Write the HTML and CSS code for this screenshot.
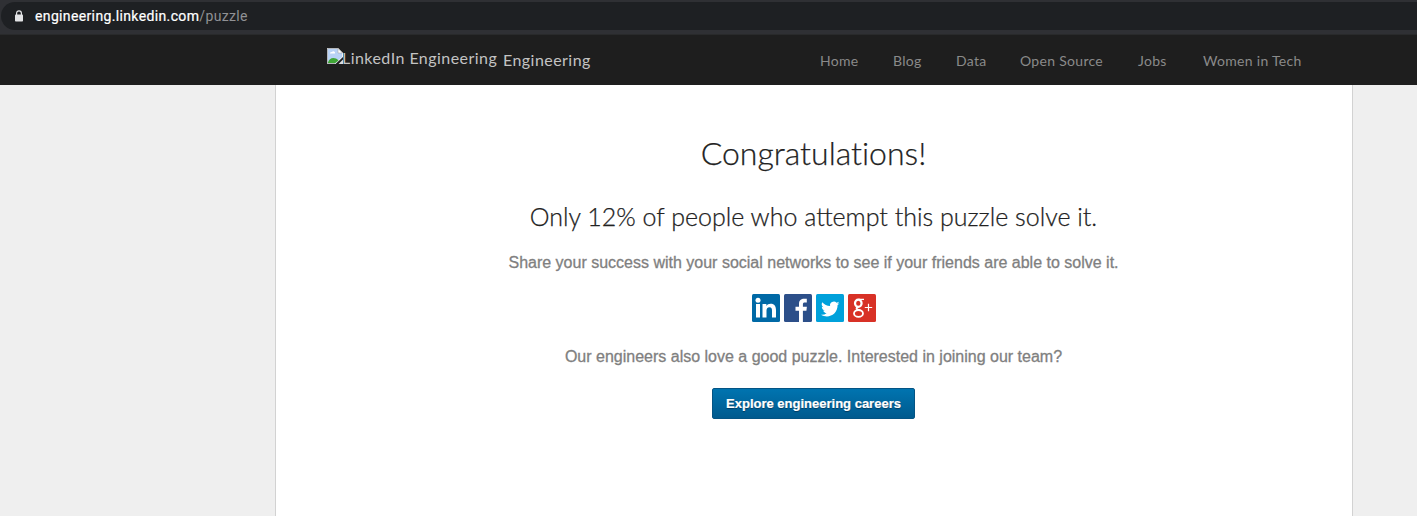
FILE: index.html
```html
<!DOCTYPE html>
<html lang="en">
<head>
<meta charset="utf-8">
<title>LinkedIn Engineering</title>
<link rel="stylesheet" href="styles.css">
</head>
<body>
<div class="browser">
  <div class="address">
    <svg class="lock" width="10" height="12" viewBox="0 0 10 12"><rect x="1" y="4.500" width="8" height="7" rx=".8" fill="#e3e4e6"/><path d="M2.600 5V3.200a2.400 2.400 0 0 1 4.800 0V5" fill="none" stroke="#e3e4e6" stroke-width="1.200"/></svg>
    <span class="url"><span class="domain">engineering.linkedin.com</span><span class="path">/puzzle</span></span>
  </div>
</div>
<header class="header">
  <a class="brand">
    <span class="logo">
      <svg width="16" height="16" viewBox="0 0 16 16"><path d="M0 0h11l5 5v4L8.500 16H0z" fill="#f1f3f5"/><path d="M1 1h10v4h4v4L8 15.500H1z" fill="#b9d2f5"/><path d="M3 5.500a1.500 1.500 0 0 1 2-1.500 1.700 1.700 0 0 1 3 1.500z" fill="#fff"/><path d="M1 14.500c1-4 6-6.500 10.500-2L8 15.300H1z" fill="#3fa535"/><path d="M11 .5V5h4.500z" fill="#fff" stroke="#aaa" stroke-width=".6"/><path d="M.5 15.500V.5H11M0 15.500h8" fill="none" stroke="#b4b7ba"/><path d="M11.500 16l4.500-4.500V16z" fill="#d8dadd"/></svg>
      <span class="alt">LinkedIn Engineering</span>
    </span>
    <span class="name">Engineering</span>
  </a>
  <nav class="nav">
    <a class="n-home">Home</a><a class="n-blog">Blog</a><a class="n-data">Data</a><a class="n-source">Open Source</a><a class="n-jobs">Jobs</a><a class="n-women">Women in Tech</a>
  </nav>
</header>
<main class="content">
  <h1><span>Congratulations!</span></h1>
  <h2><span>Only 12% of people who attempt this puzzle solve it.</span></h2>
  <p class="share"><span>Share your success with your social networks to see if your friends are able to solve it.</span></p>
  <div class="social">
    <svg viewBox="0 0 28 28"><rect width="28" height="28" rx="1.500" fill="#0069a6"/><circle cx="6" cy="6.200" r="2.500" fill="#fff"/><path d="M4 10h4v13.500H4zM10.500 10h3.900v1.900c.8-1.400 2.300-2.200 4.200-2.200 4 0 5.400 2.500 5.400 6.300v7.500h-4v-6.800c0-2-.4-3.500-2.500-3.500-2.200 0-3 1.500-3 3.600v6.700h-4z" fill="#fff"/></svg>
    <svg viewBox="0 0 28 28"><rect width="28" height="28" rx="1.500" fill="#2c4f89"/><path d="M15 28V16.800h-3.500v-4H15V10c0-3.700 2-5.200 5.200-5.200h2.600v3.800h-2c-1.300 0-1.900.6-1.900 1.800v2.400h4l-.5 4h-3.500V28z" fill="#fff"/></svg>
    <svg viewBox="0 0 28 28"><rect width="28" height="28" rx="1.500" fill="#00a1db"/><path d="M23.500 9.200c-.7.300-1.400.5-2.100.6.800-.5 1.300-1.200 1.600-2-.7.400-1.500.7-2.400.9a3.800 3.800 0 0 0-6.500 3.400c-3.100-.1-5.900-1.600-7.800-3.900a3.800 3.800 0 0 0 1.200 5c-.6 0-1.200-.2-1.700-.5 0 1.900 1.300 3.400 3 3.800-.5.200-1.100.2-1.700.1.500 1.500 1.900 2.600 3.500 2.600a7.600 7.600 0 0 1-5.600 1.600c6.900 4.200 16.600.3 16.600-9.700.8-.5 1.400-1.200 1.900-1.900z" fill="#fff"/></svg>
    <svg viewBox="0 0 28 28"><rect width="28" height="28" rx="1.500" fill="#d83126"/><g fill="none" stroke="#fff"><ellipse cx="10.300" cy="9.300" rx="3.300" ry="3.600" stroke-width="2.200"/><path d="M10.500 5.400H16" stroke-width="1.300"/><path d="M10 13c-2.500 1.200-1.500 2.200 1.500 3.300" stroke-width="1.900"/><ellipse cx="10.500" cy="19.400" rx="4.500" ry="3.400" stroke-width="1.800"/><path d="M20.500 9.800v7.400M16.800 13.500h7.400" stroke-width="1.200"/></g></svg>
  </div>
  <p class="join"><span>Our engineers also love a good puzzle. Interested in joining our team?</span></p>
  <a class="button"><span>Explore engineering careers</span></a>
</main>
</body>
</html>
```
FILE: styles.css
```css
* { box-sizing: border-box; }
body { margin: 0; height: 516px; overflow: hidden; display: flex; flex-direction: column; background: #efefef; font-family: Lato, sans-serif; }
.browser { height: 35px; flex: none; padding: 2px 0 5px 1px; background: #2f3034; border-bottom: 1px solid #292a2b; }
.address { height: 28px; display: flex; align-items: center; padding-left: 13px; background: #1e2023; border-radius: 14px 0 0 14px; }
.lock { margin-right: 11px; }
.url { font: 14px/20px Roboto, sans-serif; white-space: nowrap; letter-spacing: .36px; }
.domain { color: #fff; -webkit-text-stroke: .2px #fff; }
.path { color: #909194; }
.header { height: 50px; flex: none; display: flex; padding-left: 327px; background: #1e1e1e; }
.brand { display: flex; width: 493px; flex: none; color: #c3c3c3; font-size: 16px; line-height: 20px; white-space: nowrap; letter-spacing: .45px; }
.logo { display: flex; width: 176px; padding-top: 13px; }
.alt { margin-left: -1px; }
.name { padding-top: 15px; }
.nav { display: flex; padding-top: 16px; color: #8a8a8a; font-size: 14px; line-height: 20px; white-space: nowrap; letter-spacing: .3px; }
.n-home { width: 73px; }
.n-blog { width: 63px; }
.n-data { width: 64px; }
.n-source { width: 118px; }
.n-jobs { width: 65px; }
.content { width: 1078px; flex: 1; margin-left: 275px; background: #fff; border: solid #d2d2d2; border-width: 0 1px; display: flex; flex-direction: column; align-items: center; padding: 48px 1px 0 0; color: #333; }
h1, h2, p { margin: 0; font-weight: 300; white-space: nowrap; }
h1, h2 { color: #222; -webkit-text-stroke: .25px #222; }
h1 { font-size: 32px; line-height: 40px; font-variant-ligatures: none; }
h2 { margin-top: 27px; font-size: 25px; line-height: 32px; }
p { font: 16px/20px "Liberation Sans", Arial, sans-serif; color: #808080; -webkit-text-stroke: .3px #808080; }
.share { margin-top: 21px; }
.social { display: flex; gap: 4px; margin-top: 21px; padding-left: 1px; }
.social svg { width: 28px; height: 28px; }
.join { margin-top: 25px; }
.button { margin-top: 21px; width: 203px; height: 31px; border: 1px solid #045484; border-radius: 2px; background: linear-gradient(#0074b0, #005a8e); color: #fff; font: bold 13px/29px "Liberation Sans", Arial, sans-serif; text-align: center; text-shadow: 0 1px 1px #00395c; white-space: nowrap; -webkit-text-stroke: .2px #fff; }
```
